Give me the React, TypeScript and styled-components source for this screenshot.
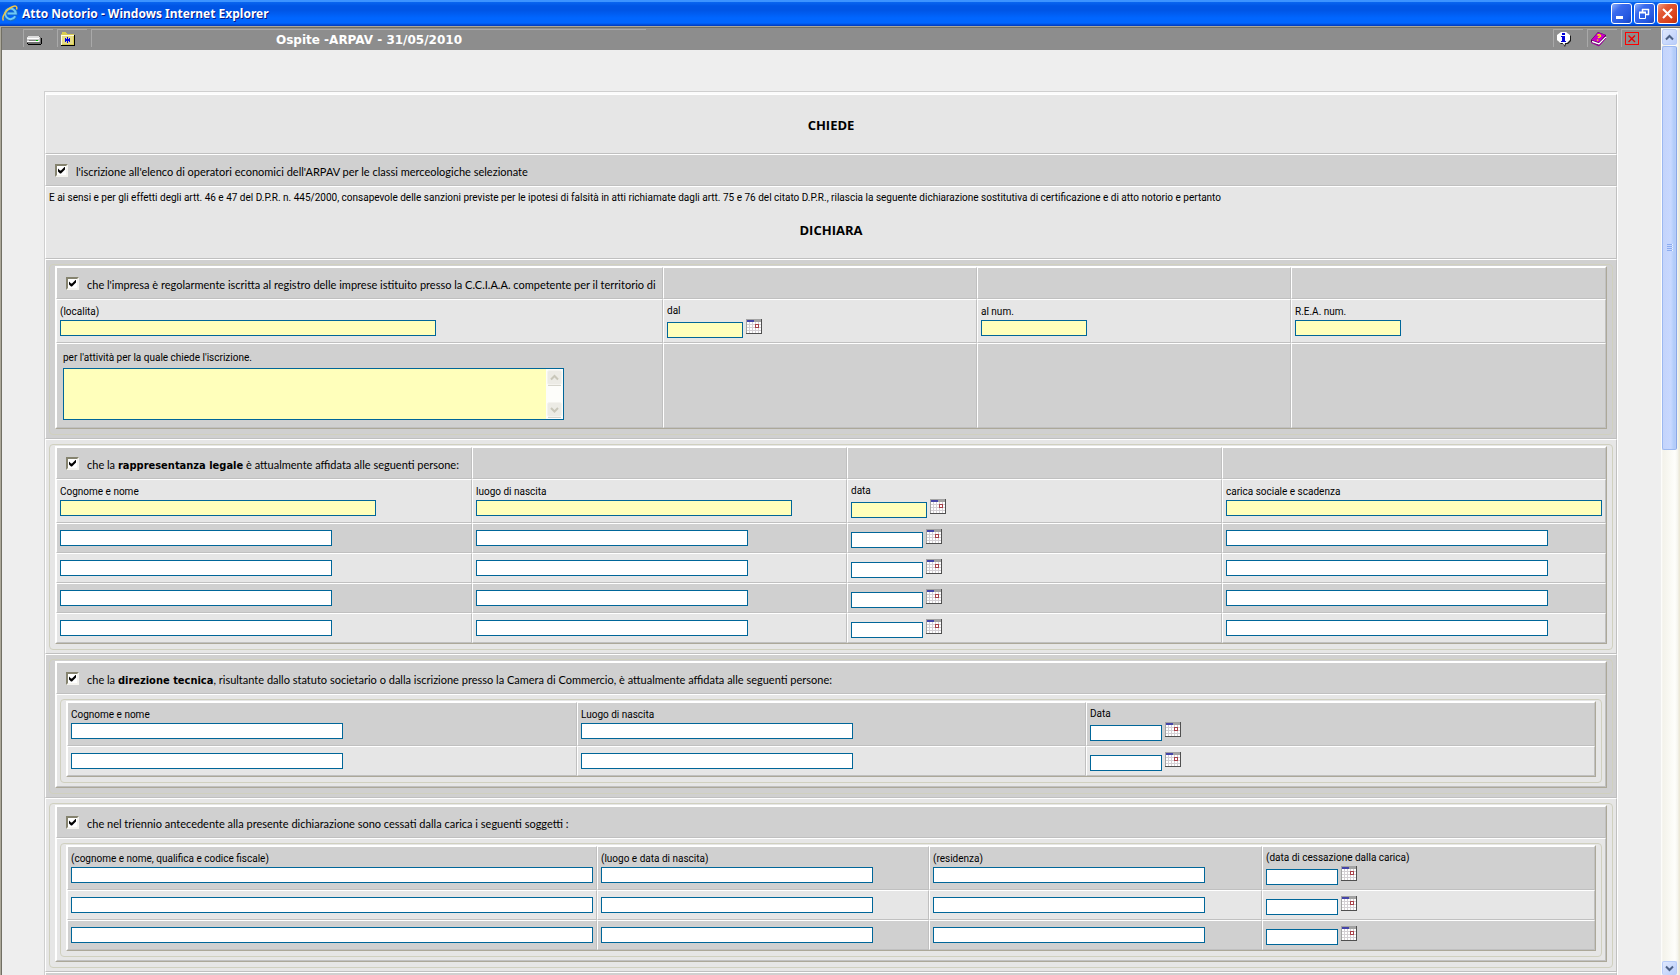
import React from 'react';
import styled, { createGlobalStyle, css } from 'styled-components';

const GlobalStyle = createGlobalStyle`
  *, *::before, *::after { box-sizing: border-box; }
  body { margin: 0; background: #eeeeee; }
  button, input, textarea { font: inherit; margin: 0; padding: 0; border-radius: 0; }
`;

const LIGHT = '#e6e6e6';
const DARK = '#d0d0d0';
const LINE = '#c0c0c0';
const BLUE = '#006699';

/* ---------- window frame ---------- */

const Window = styled.div`
  display: flex;
  flex-direction: column;
  height: 100vh;
  overflow: hidden;
  background: #eeeeee;
  color: #000000;
  font-family: Roboto, 'Liberation Sans', sans-serif;
  font-size: 10px;
  line-height: 14px;
`;

const TitleBar = styled.header`
  display: flex;
  align-items: center;
  flex: none;
  height: 26px;
  padding: 0 2px;
  background: linear-gradient(
    to bottom,
    #3c93ff 0, #3c93ff 2px, #0a66f0 2px, #0055e5 6px, #0055e5 10px,
    #0066ff 18px, #0066ff 23px, #0047d0 25px, #0038b8 26px
  );
`;

const WindowTitle = styled.h1`
  flex: 1;
  margin: 0 0 0 4px;
  padding-top: 2px;
  color: #ffffff;
  font: bold 12px/20px 'Noto Sans', sans-serif;
  text-shadow: 1px 1px 0 #0a1883;
`;

const WindowButtons = styled.div`
  display: flex;
  gap: 2px;
`;

const WindowButton = styled.button<{ $close?: boolean }>`
  display: flex;
  width: 21px;
  height: 21px;
  border: 1px solid #ffffff;
  border-radius: 3px;
  background: ${(p) =>
    p.$close
      ? 'linear-gradient(135deg, #f0a088 0, #e35a35 30%, #d9401a 75%, #b82f0c 100%)'
      : 'linear-gradient(135deg, #8fb0f8 0, #3a6bee 30%, #2558e0 75%, #1a44c0 100%)'};
`;

const Viewport = styled.div`
  display: flex;
  flex: 1;
  min-height: 0;
  border-top: 1px solid #aca899;
  border-left: 1px solid #aca899;
`;

const Page = styled.div`
  flex: 1;
  min-width: 0;
  overflow: hidden;
  border-top: 1px solid #716f64;
  border-left: 1px solid #716f64;
`;

/* ---------- toolbar ---------- */

const Toolbar = styled.nav`
  display: flex;
  gap: 4px;
  height: 22px;
  padding: 1px 10px 0 21px;
  background: #8d8d8d;
`;

const ToolButton = styled.button`
  display: flex;
  align-items: flex-start;
  justify-content: flex-start;
  width: 30px;
  height: 18px;
  padding: 1px 0 0 2px;
  border: 0 solid #a9a9a9;
  border-width: 1px 0 0 1px;
  background: none;

  svg { flex: none; }
`;

const SessionInfo = styled.div`
  width: 555px;
  height: 18px;
  border: 0 solid #a9a9a9;
  border-width: 1px 0 0 1px;
  color: #ffffff;
  font: bold 12px/20px 'DejaVu Sans', Verdana, sans-serif;
  text-align: center;
`;

const Spacer = styled.div`
  flex: 1;
`;

/* ---------- form ---------- */

const Content = styled.main`
  padding: 41px 43px 0 42px;
`;

const Sheet = styled.form`
  border: 1px solid #cfcfcf;
  border-bottom: 0;
  border-right-color: #ffffff;
  padding-top: 2px;
  background: #fbfbfb;
`;

const cellBorder = css`
  border: 1px solid;
  border-color: #ffffff ${LINE} ${LINE} #ffffff;
`;

const HeadingRow = styled.section`
  ${cellBorder}
  height: 60px;
  padding-top: 21px;
  background: ${LIGHT};
`;

const Heading = styled.h2`
  margin: 0;
  font: bold 13px/18px 'Open Sans', 'Noto Sans', sans-serif;
  text-align: center;
`;

const CheckRow = styled.label`
  ${cellBorder}
  display: flex;
  align-items: center;
  gap: 8px;
  height: 32px;
  padding: 0 0 0 9px;
  background: ${DARK};
  font-family: Lato, 'Liberation Sans', sans-serif;
  font-size: 11px;
  white-space: nowrap;

  b { font-family: 'DejaVu Sans Condensed', 'DejaVu Sans', sans-serif; }
`;

const CheckText = styled.span`
  padding-top: 4px;
`;

const CheckBox = styled.input.attrs({ type: 'checkbox', defaultChecked: true })`
  appearance: none;
  display: grid;
  place-items: center;
  flex: none;
  width: 13px;
  height: 13px;
  border: 2px solid;
  border-color: #85836f #f4f3ee #f4f3ee #85836f;
  background: #ffffff;

  &:checked::before {
    content: '';
    width: 7px;
    height: 7px;
    background: #000000;
    clip-path: polygon(0 2px, 2px 4px, 3px 4px, 7px 0, 7px 3px, 3px 7px, 2px 7px, 0 5px);
  }
`;

const StatementRow = styled.section`
  ${cellBorder}
  height: 73px;
  padding-top: 4px;
  background: ${LIGHT};
`;

const Statement = styled.p`
  margin: 0 0 16px;
  padding-left: 3px;
  white-space: nowrap;
`;

const SectionRow = styled.section<{ $dark?: boolean }>`
  ${cellBorder}
  padding: 4px 3px 3px;
  background: ${(p) => (p.$dark ? DARK : LIGHT)};
`;

const Group = styled.fieldset`
  min-width: 0;
  margin: 0;
  padding: 1px 5px 5px;
  border: 1px solid #d0d0bf;
  border-radius: 4px;
`;

const Panel = styled.div`
  border: 1px solid;
  border-color: #ffffff #aca899 #aca899 #ffffff;
`;

const Grid = styled.div<{ $columns: string }>`
  display: grid;
  grid-template-columns: ${(p) => p.$columns};
`;

const Cell = styled.div<{ $dark?: boolean; $h: 'head' | 'labelled' | 'plain' | 'tall' }>`
  ${cellBorder}
  display: flex;
  flex-direction: column;
  justify-content: center;
  min-width: 0;
  min-height: ${(p) => ({ head: 32, labelled: 44, plain: 30, tall: 85 })[p.$h]}px;
  padding: 0 3px;
  background: ${(p) => (p.$dark ? DARK : LIGHT)};
`;

const Field = styled.label<{ $date?: boolean }>`
  display: flex;
  flex-direction: column;
  gap: 2px;
  padding-top: ${(p) => (p.$date ? 1 : 0)}px;
  line-height: 12px;
`;

const fieldBox = css<{ $required?: boolean }>`
  border: 1px solid ${BLUE};
  background: ${(p) => (p.$required ? '#ffffbb' : '#ffffff')};
`;

const TextInput = styled.input.attrs({ type: 'text' })<{ $required?: boolean; $w: number }>`
  ${fieldBox}
  width: ${(p) => p.$w}px;
  max-width: 100%;
  height: 16px;
`;

const DateControl = styled.span`
  display: flex;
  align-items: flex-start;
  gap: 3px;
  height: 19px;

  input { align-self: flex-end; }
`;

const IconButton = styled.button`
  display: block;
  width: 16px;
  height: 15px;
  border: 0;
  background: none;

  svg { display: block; }
`;

const NotesField = styled.label`
  display: flex;
  flex-direction: column;
  gap: 3px;
  padding: 0 3px;
`;

const NotesBox = styled.span`
  ${fieldBox}
  display: flex;
  width: 501px;
  max-width: 100%;
  height: 52px;
`;

const NotesInput = styled.textarea`
  flex: 1;
  min-width: 0;
  border: 0;
  background: none;
  resize: none;
  overflow: hidden;
`;

const NotesScroll = styled.span`
  display: flex;
  flex-direction: column;
  justify-content: space-between;
  width: 17px;
  padding: 1px;
  background: #fdfdfa;

  svg { display: block; }
`;

/* ---------- page scrollbar ---------- */

const ScrollBar = styled.aside`
  display: flex;
  flex-direction: column;
  flex: none;
  width: 19px;
  padding: 1px 3px 0 1px;
  border-top: 1px solid #716f64;
  background: linear-gradient(to right, #ffffff 0, #f3f2ea 2px, #fefefb 14px, #f4f3ec 17px, #ece9d8 18px);
`;

const ScrollButton = styled.button<{ $clipped?: boolean }>`
  display: flex;
  justify-content: center;
  align-items: center;
  flex: none;
  height: ${(p) => (p.$clipped ? 14 : 16)}px;
  border: 1px solid #b8ccf8;
  border-bottom-width: ${(p) => (p.$clipped ? 0 : 1)}px;
  border-radius: 2px;
  background: linear-gradient(135deg, #dfe8fe, #b9cdfa);
`;

const ScrollThumb = styled.div`
  display: flex;
  flex-direction: column;
  justify-content: center;
  align-items: center;
  gap: 1px;
  flex: 403;
  margin-top: 1px;
  border: 1px solid #9cb8f0;
  border-right-color: #89a8e6;
  border-radius: 2px;
  background: linear-gradient(to right, #c4d4fb 0, #c8d8ff 60%, #b0ccfa 85%, #b9cbf7 100%);
`;

const ScrollTrack = styled.div`
  flex: 513;
`;

const Grip = styled.span`
  width: 6px;
  height: 1px;
  background: #8cacf0;
  border-right: 1px solid #eef4fe;
`;

/* ---------- icons ---------- */

const CalendarIcon = () => (
  <svg width="16" height="15" viewBox="0 0 16 15" shapeRendering="crispEdges" aria-hidden="true">
    <rect width="16" height="15" fill="#a3a3a3" />
    <rect x="1" y="1" width="7" height="2" fill="#4545a8" />
    <rect x="1" y="3" width="14" height="11" fill="#ffffff" />
    <path d="M3.5 3v11M6.5 3v11M9.5 3v11M12.5 3v11M1 5.500h14M1 8.500h14M1 11.500h14" stroke="#d4d0d4" />
    <rect x="9.500" y="5.500" width="3" height="3" fill="#ffffff" stroke="#a84048" />
    <path d="M15.500 0v15M0 14.500h16" stroke="#505050" />
  </svg>
);

const ChevronIcon = ({ down, color = '#4d6185' }: { down?: boolean; color?: string }) => (
  <svg width="9" height="7" viewBox="0 0 9 7" aria-hidden="true">
    <path d={down ? 'M1 1.500 4.500 5 8 1.500' : 'M1 5.500 4.500 2 8 5.500'} fill="none" stroke={color} strokeWidth="2" />
  </svg>
);

const MutedArrow = ({ down }: { down?: boolean }) => (
  <svg width="15" height="16" viewBox="0 0 15 16" aria-hidden="true">
    <rect x="0.500" y="0.500" width="14" height="14" rx="2" fill="#ecebe5" stroke="#f4f3ee" />
    <path d="M1 15.500h13" stroke="#d6d5cc" />
    <path d={down ? 'M4 6 7.500 9.500 11 6' : 'M4 9.500 7.500 6 11 9.500'} fill="none" stroke="#c9c7ba" strokeWidth="2" />
  </svg>
);

const ExplorerIcon = () => (
  <svg width="16" height="17" viewBox="0 0 16 17" aria-hidden="true">
    <path d="M13.500 11.500A5.500 5.500 0 1 1 14 8.500H5.500" fill="none" stroke="#1c6fc4" strokeWidth="3.400" />
    <path d="M13.200 11.300A5.300 5.300 0 1 1 13.800 8.500H5.500" fill="none" stroke="#6cc9f8" strokeWidth="2" />
    <path d="M1.500 15.500C-1 12 5 3.500 11 1.500c3-1 4.500 0 3.500 3" fill="none" stroke="#f0c544" strokeWidth="1.500" />
  </svg>
);

const DriveIcon = () => (
  <svg width="16" height="16" viewBox="0 0 16 16" shapeRendering="crispEdges" aria-hidden="true">
    <path d="M2 6h12l2 2v4l-1 2H2l-1-1V8z" fill="#000000" />
    <path d="M2 5h11l2 2v5l-1 1H2l-1-1V7z" fill="#6e6e6e" />
    <path d="M2 5h11l1 2H1z" fill="#dcdcdc" />
    <path d="M1 7h13v4H1z" fill="#c8c8c8" />
    <path d="M1 7h12v1H1zM1 10h12v1H1z" fill="#ffffff" />
    <path d="M3 9h7v1H3z" fill="#808080" />
    <path d="M10 9h2v1h-2z" fill="#00c000" />
  </svg>
);

const FolderIcon = () => (
  <svg width="16" height="16" viewBox="0 0 16 16" shapeRendering="crispEdges" aria-hidden="true">
    <path d="M1 4h1V2h5v2h8v11H1z" fill="#000000" />
    <path d="M1 3h1V1h4l1 2h7v11H1z" fill="#d8cc50" />
    <path d="M1 4h12v9H1z" fill="#e6dc84" />
    <path d="M1 4h13v1H2v9H1z" fill="#fffce0" />
    <path d="M7 6h1v6H7zM5 7h1v1H5zM9 7h1v1H9zM5 10h1v1H5zM9 10h1v1H9zM5 8h5v2H5z" fill="#0000e0" />
  </svg>
);

const InfoIcon = () => (
  <svg width="16" height="16" viewBox="0 0 16 16" aria-hidden="true">
    <path d="M5 2h6l4 3v5l-3 3h-2l-1 3-2-3H5l-3-3V5z" fill="#1a1a1a" />
    <path d="M5 1h5l4 3v5l-3 3H9l-.5 2.500L6.500 12H4L1 9V4z" fill="#ffffff" />
    <path d="M6 2h3v2H6zM5 5h4v5h1v1H5v-1h1V6H5z" fill="#0000d8" shapeRendering="crispEdges" />
  </svg>
);

const BookIcon = () => (
  <svg width="17" height="16" viewBox="0 0 17 16" aria-hidden="true">
    <path d="M1 9 8 1l8 3v3l-7 8-8-4z" fill="#4b004b" />
    <path d="M1.500 9 8 1.500 15.500 4 9 11.500z" fill="#c800c8" />
    <path d="M2 10.500 9 13l7-7" fill="none" stroke="#ffffff" strokeWidth="1.500" />
    <path d="M1 11.500 9 15l7-8" fill="none" stroke="#a000a0" />
    <path d="M7.500 4.500c1-1.500 3.500-.5 3 .7-.3.800-2 .8-2.300 2M7.600 8.500v1.300" fill="none" stroke="#ffee00" strokeWidth="1.400" />
  </svg>
);

const ExitIcon = () => (
  <svg width="16" height="16" viewBox="0 0 16 16" aria-hidden="true">
    <rect x="1.500" y="1.500" width="13" height="12" fill="none" stroke="#ff0000" shapeRendering="crispEdges" />
    <path d="M4.500 4.500 11 11M11 4.500 4.500 11" stroke="#ee0000" strokeWidth="1.400" />
  </svg>
);

const GlyphSvg = styled.svg.attrs({ width: 19, height: 19, viewBox: '0 0 19 19', 'aria-hidden': true })`
  fill: none;
  stroke: #ffffff;
`;

/* ---------- composed parts ---------- */

interface FieldCellProps {
  name: string;
  label?: string;
  hint?: string;
  width: number;
  date?: boolean;
  required?: boolean;
  dark?: boolean;
}

const FieldCell = ({ name, label, hint, width, date, required, dark }: FieldCellProps) => {
  const input = (
    <TextInput id={name} name={name} aria-label={label ? undefined : hint} $w={width} $required={required} />
  );
  return (
    <Cell $dark={dark} $h={label ? 'labelled' : 'plain'}>
      <Field htmlFor={name} $date={date}>
        {label}
        {date ? (
          <DateControl>
            {input}
            <IconButton type="button" aria-label="Calendario"><CalendarIcon /></IconButton>
          </DateControl>
        ) : input}
      </Field>
    </Cell>
  );
};

const Check = ({ name, children }: { name: string; children: React.ReactNode }) => (
  <CheckRow>
    <CheckBox name={name} />
    <CheckText>{children}</CheckText>
  </CheckRow>
);

interface Column {
  key: string;
  label: string;
  width: number;
  date?: boolean;
}

const PeopleGrid = ({ id, columns, layout, rows }: { id: string; columns: Column[]; layout: string; rows: number }) => (
  <SectionRow>
    <Group>
      <Panel>
        <Grid $columns={layout}>
          {Array.from({ length: rows }, (_, r) =>
            columns.map((c) => (
              <FieldCell
                key={`${c.key}${r}`}
                name={`${id}-${c.key}-${r}`}
                label={r === 0 ? c.label : undefined}
                hint={c.label}
                width={c.width}
                date={c.date}
                dark={r % 2 === 0}
              />
            )),
          )}
        </Grid>
      </Panel>
    </Group>
  </SectionRow>
);

const legalColumns: (Column & { first: number })[] = [
  { key: 'nome', label: 'Cognome e nome', first: 316, width: 272 },
  { key: 'luogo', label: 'luogo di nascita', first: 316, width: 272 },
  { key: 'data', label: 'data', first: 76, width: 72, date: true },
  { key: 'carica', label: 'carica sociale e scadenza', first: 376, width: 322 },
];

const technicalColumns: Column[] = [
  { key: 'nome', label: 'Cognome e nome', width: 272 },
  { key: 'luogo', label: 'Luogo di nascita', width: 272 },
  { key: 'data', label: 'Data', width: 72, date: true },
];

const formerColumns: Column[] = [
  { key: 'nome', label: '(cognome e nome, qualifica e codice fiscale)', width: 522 },
  { key: 'luogo', label: '(luogo e data di nascita)', width: 272 },
  { key: 'residenza', label: '(residenza)', width: 272 },
  { key: 'data', label: '(data di cessazione dalla carica)', width: 72, date: true },
];

export default function App() {
  return (
    <Window>
      <GlobalStyle />
      <TitleBar>
        <ExplorerIcon />
        <WindowTitle>Atto Notorio - Windows Internet Explorer</WindowTitle>
        <WindowButtons>
          <WindowButton aria-label="Riduci a icona">
            <GlyphSvg><path d="M4 13.500h7" strokeWidth="3" /></GlyphSvg>
          </WindowButton>
          <WindowButton aria-label="Ripristina">
            <GlyphSvg>
              <path d="M7 5.500h7M13.500 5v6M7.500 5v3M11 10.500h3" strokeWidth="1.500" />
              <path d="M4 8.500h7" strokeWidth="2" />
              <path d="M4.500 8v6.500h6V8" />
            </GlyphSvg>
          </WindowButton>
          <WindowButton $close aria-label="Chiudi">
            <GlyphSvg><path d="M5 5l9 9M14 5l-9 9" strokeWidth="2" /></GlyphSvg>
          </WindowButton>
        </WindowButtons>
      </TitleBar>

      <Viewport>
        <Page>
          <Toolbar>
            <ToolButton aria-label="Salva"><DriveIcon /></ToolButton>
            <ToolButton aria-label="Nuovo"><FolderIcon /></ToolButton>
            <SessionInfo>Ospite -ARPAV - 31/05/2010</SessionInfo>
            <Spacer />
            <ToolButton aria-label="Informazioni"><InfoIcon /></ToolButton>
            <ToolButton aria-label="Guida"><BookIcon /></ToolButton>
            <ToolButton aria-label="Esci"><ExitIcon /></ToolButton>
          </Toolbar>

          <Content>
            <Sheet>
              <HeadingRow><Heading>CHIEDE</Heading></HeadingRow>
              <Check name="iscrizione">
                l'iscrizione all'elenco di operatori economici dell'ARPAV per le classi merceologiche selezionate
              </Check>
              <StatementRow>
                <Statement>
                  E ai sensi e per gli effetti degli artt. 46 e 47 del D.P.R. n. 445/2000, consapevole delle sanzioni
                  previste per le ipotesi di falsità in atti richiamate dagli artt. 75 e 76 del citato D.P.R., rilascia
                  la seguente dichiarazione sostitutiva di certificazione e di atto notorio e pertanto
                </Statement>
                <Heading>DICHIARA</Heading>
              </StatementRow>

              <SectionRow $dark>
                <Group>
                  <Panel>
                    <Grid $columns="607fr 314fr 314fr 315fr">
                      <Check name="registro">
                        che l'impresa è regolarmente iscritta al registro delle imprese istituito presso la C.C.I.A.A.
                        competente per il territorio di
                      </Check>
                      <Cell $dark $h="head" />
                      <Cell $dark $h="head" />
                      <Cell $dark $h="head" />
                      <FieldCell name="localita" label="(localita)" width={376} required />
                      <FieldCell name="dal" label="dal" width={76} date required />
                      <FieldCell name="num" label="al num." width={106} required />
                      <FieldCell name="rea" label="R.E.A. num." width={106} required />
                      <Cell $dark $h="tall">
                        <NotesField>
                          per l'attività per la quale chiede l'iscrizione.
                          <NotesBox $required>
                            <NotesInput name="attivita" />
                            <NotesScroll>
                              <MutedArrow />
                              <MutedArrow down />
                            </NotesScroll>
                          </NotesBox>
                        </NotesField>
                      </Cell>
                      <Cell $dark $h="tall" />
                      <Cell $dark $h="tall" />
                      <Cell $dark $h="tall" />
                    </Grid>
                  </Panel>
                </Group>
              </SectionRow>

              <SectionRow>
                <Group>
                  <Panel>
                    <Grid $columns="416fr 375fr 375fr 384fr">
                      <Check name="rappresentanza">
                        che la <b>rappresentanza legale</b> è attualmente affidata alle seguenti persone:
                      </Check>
                      <Cell $dark $h="head" />
                      <Cell $dark $h="head" />
                      <Cell $dark $h="head" />
                      {[0, 1, 2, 3, 4].map((r) =>
                        legalColumns.map((c) => (
                          <FieldCell
                            key={`${c.key}${r}`}
                            name={`legale-${c.key}-${r}`}
                            label={r === 0 ? c.label : undefined}
                            hint={c.label}
                            width={r === 0 ? c.first : c.width}
                            date={c.date}
                            required={r === 0}
                            dark={r % 2 === 1}
                          />
                        )),
                      )}
                    </Grid>
                  </Panel>
                </Group>
              </SectionRow>

              <SectionRow $dark>
                <Group>
                  <Panel>
                    <Check name="direzione">
                      che la <b>direzione tecnica</b>, risultante dallo statuto societario o dalla iscrizione presso la
                      Camera di Commercio, è attualmente affidata alle seguenti persone:
                    </Check>
                    <PeopleGrid id="tecnica" columns={technicalColumns} layout="510fr 509fr 509fr" rows={2} />
                  </Panel>
                </Group>
              </SectionRow>

              <SectionRow>
                <Group>
                  <Panel>
                    <Check name="cessati">
                      che nel triennio antecedente alla presente dichiarazione sono cessati dalla carica i seguenti
                      soggetti :
                    </Check>
                    <PeopleGrid id="cessati" columns={formerColumns} layout="530fr 332fr 333fr 333fr" rows={3} />
                  </Panel>
                </Group>
              </SectionRow>

              <SectionRow $dark />
            </Sheet>
          </Content>
        </Page>

        <ScrollBar>
          <ScrollButton aria-label="Scorri su"><ChevronIcon /></ScrollButton>
          <ScrollThumb>
            <Grip /><Grip /><Grip /><Grip />
          </ScrollThumb>
          <ScrollTrack />
          <ScrollButton $clipped aria-label="Scorri giù"><ChevronIcon down /></ScrollButton>
        </ScrollBar>
      </Viewport>
    </Window>
  );
}
